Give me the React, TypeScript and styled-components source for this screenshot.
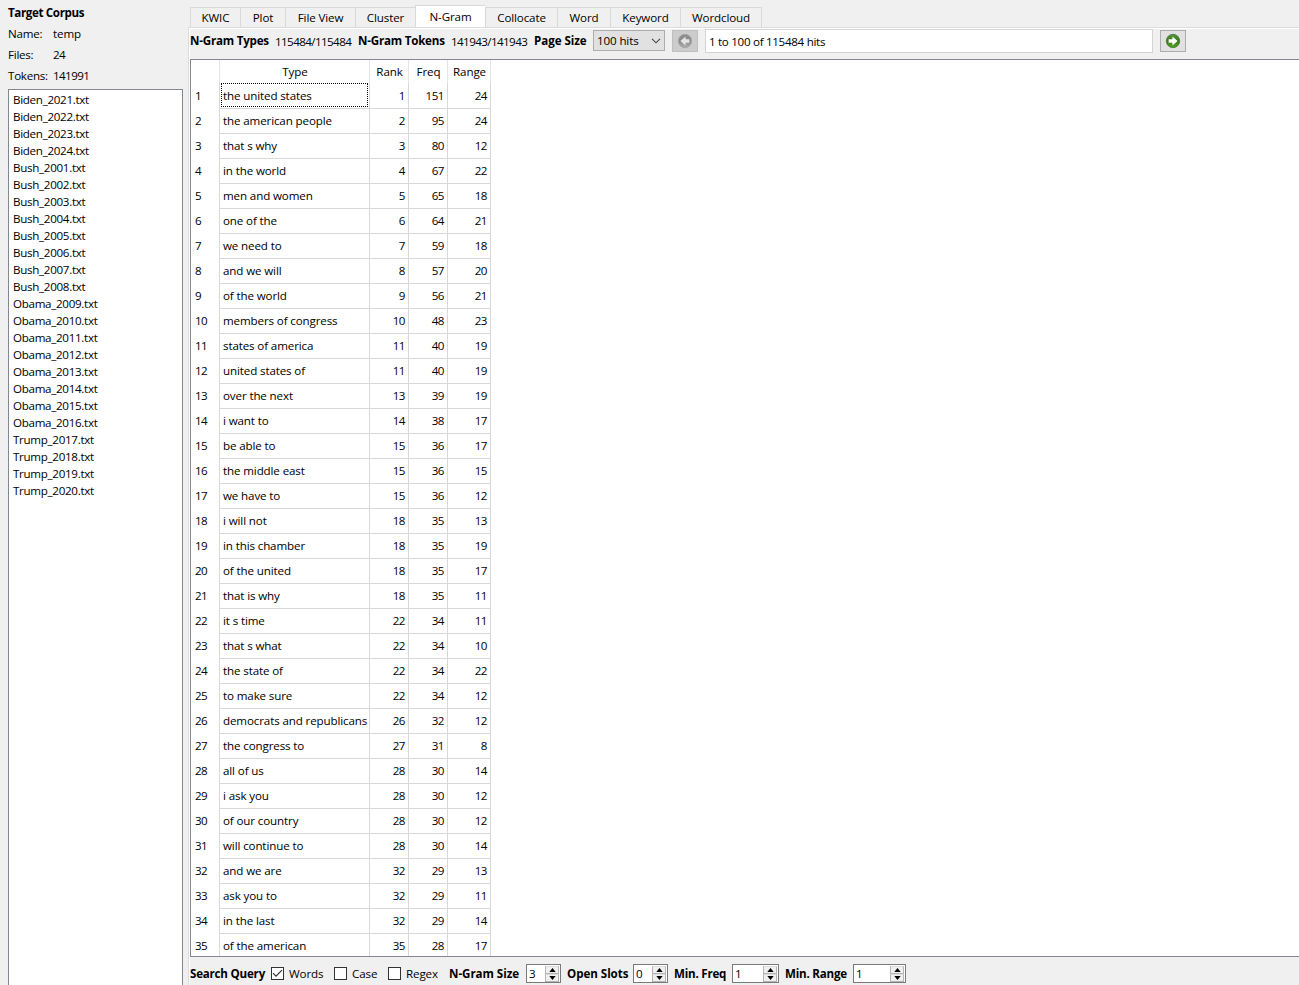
import React from "react";
import styled, { createGlobalStyle } from "styled-components";

const GlobalStyle = createGlobalStyle`
  * { box-sizing: border-box; }
  html, body { margin: 0; padding: 0; overflow: hidden; }
  body { background: #f0f0f0; color: #000; font: 11.6px/17px "Open Sans", "Noto Sans", sans-serif; letter-spacing: -0.13px; }
`;

const Window = styled.div`
  display: flex;
  width: 1299px;
  height: 985px;
  overflow: hidden;
  white-space: nowrap;
`;

const Sidebar = styled.aside`
  flex: none;
  width: 188px;
  padding: 4px 5px 0 8px;
  display: flex;
  flex-direction: column;
`;

const Heading = styled.div`
  height: 21px;
  line-height: 18px;
  font-weight: 700;
  letter-spacing: -0.37px;
`;

const InfoRow = styled.div`
  display: flex;
  height: 21px;
  line-height: 17px;
`;

const InfoLabel = styled.span`
  width: 45px;
  letter-spacing: -0.25px;
`;

const Digits = styled.span`
  letter-spacing: -0.58px;
`;

const FileList = styled.ul`
  list-style: none;
  margin: 1px 0 0;
  padding: 2px 4px;
  flex: 1;
  background: #fff;
  border: 1px solid #828790;
  border-bottom: 0;
`;

const FileItem = styled.li`
  height: 17px;
  line-height: 16px;
  letter-spacing: -0.3px;
`;

const Main = styled.main`
  flex: 1;
  min-width: 0;
  display: flex;
  flex-direction: column;
`;

const TabBar = styled.div`
  display: flex;
  align-items: flex-end;
  height: 27px;
  padding-left: 2px;
`;

const Tab = styled.div<{ $w: number; $active?: boolean; $last?: boolean }>`
  width: ${(p) => p.$w}px;
  height: ${(p) => (p.$active ? 23 : 20)}px;
  margin-bottom: ${(p) => (p.$active ? -1 : 0)}px;
  line-height: ${(p) => (p.$active ? 21 : 20)}px;
  text-align: center;
  background: ${(p) => (p.$active ? "#fff" : "#f0f0f0")};
  border: 1px solid #d9d9d9;
  border-bottom: 0;
  border-right-width: ${(p) => (p.$last ? 1 : 0)}px;
`;

const Pane = styled.section`
  flex: 1;
  min-height: 0;
  display: flex;
  flex-direction: column;
  border-left: 1px solid #dcdcdc;
  border-top: 1px solid #dcdcdc;
  box-shadow: inset 1px 1px 0 #fff;
  padding-left: 1px;
`;

const Toolbar = styled.div`
  display: flex;
  flex: none;
  height: 31px;
  padding-top: 1px;
`;

const Strong = styled.span<{ $w: number; $spacing?: number }>`
  flex: none;
  width: ${(p) => p.$w}px;
  line-height: 24px;
  font-weight: 700;
  letter-spacing: ${(p) => p.$spacing ?? -0.22}px;
`;

const Count = styled(Digits)<{ $w: number }>`
  flex: none;
  width: ${(p) => p.$w}px;
  line-height: 25px;
`;

const Select = styled.div`
  display: flex;
  flex: none;
  justify-content: space-between;
  align-items: center;
  width: 72px;
  height: 21px;
  margin: 1px 7px 0 0;
  padding: 0 3px;
  background: #e1e1e1;
  border: 1px solid #adadad;
`;

const NavButton = styled.button<{ $disabled?: boolean }>`
  flex: none;
  display: flex;
  align-items: center;
  justify-content: center;
  width: 26px;
  height: 22px;
  margin-top: 1px;
  padding: 0 1px 0 0;
  background: ${(p) => (p.$disabled ? "#cccccc" : "#e1e1e1")};
  border: 1px solid ${(p) => (p.$disabled ? "#bfbfbf" : "#adadad")};
`;

const HitsField = styled.div`
  flex: none;
  width: 448px;
  height: 24px;
  margin: 0 7px;
  padding-left: 3px;
  line-height: 23px;
  letter-spacing: -0.3px;
  background: #fff;
  border: 1px solid #d4d4d4;
`;

const TableFrame = styled.div`
  flex: none;
  height: 898px;
  background: #fff;
  border: 1px solid #828790;
  border-right: 0;
  overflow: hidden;
`;

const Row = styled.div`
  display: grid;
  grid-template-columns: 29px 150px 39px 39px 43px;
  height: 25px;
`;

const HeaderRow = styled(Row)`
  height: 23px;
`;

const HeaderCell = styled.div`
  padding-left: 1px;
  text-align: center;
  line-height: 24px;
  border-right: 1px solid #e5e5e5;
`;

const RowNumber = styled.div`
  padding-left: 4px;
  line-height: 25px;
  letter-spacing: -0.55px;
  border-right: 1px solid #d8d8d8;
`;

const Cell = styled.div<{ $num?: boolean }>`
  padding: 0 3px;
  line-height: 25px;
  text-align: ${(p) => (p.$num ? "right" : "left")};
  letter-spacing: ${(p) => (p.$num ? "-0.5px" : "-0.13px")};
  border-right: 1px solid #d8d8d8;
  border-bottom: 1px solid #d8d8d8;
`;

const FocusCell = styled(Cell)`
  padding: 0 1px 0 1px;
  & > span {
    display: block;
    height: 24px;
    padding-left: 1px;
    border: 1px dotted #000;
    line-height: 23px;
  }
`;

const SearchBar = styled.div`
  display: flex;
  flex: 1;
  padding-top: 5px;
`;

const CheckBox = styled.span`
  flex: none;
  display: flex;
  width: 13px;
  height: 13px;
  margin: 5px 5px 0 0;
  background: #fff;
  border: 1px solid #333;
`;

const Option = styled.span<{ $w: number }>`
  flex: none;
  width: ${(p) => p.$w}px;
  line-height: 24px;
`;

const Spin = styled.div<{ $w: number; $gap: number }>`
  flex: none;
  display: flex;
  justify-content: space-between;
  width: ${(p) => p.$w}px;
  height: 19px;
  margin: 2px ${(p) => p.$gap}px 0 0;
  padding-left: 2px;
  line-height: 18px;
  background: #fff;
  border: 1px solid #7a7a7a;
`;

const Steppers = styled.div`
  display: flex;
  flex-direction: column;
  width: 15px;
  padding: 1px 1px 0 0;
`;

const Stepper = styled.div`
  display: flex;
  align-items: center;
  justify-content: center;
  height: 8px;
  background: #f0f0f0;
  border: 1px solid #b4b4b4;
  border-top-color: #dcdcdc;
`;

const files = [
  "Biden_2021", "Biden_2022", "Biden_2023", "Biden_2024",
  "Bush_2001", "Bush_2002", "Bush_2003", "Bush_2004", "Bush_2005", "Bush_2006", "Bush_2007", "Bush_2008",
  "Obama_2009", "Obama_2010", "Obama_2011", "Obama_2012", "Obama_2013", "Obama_2014", "Obama_2015", "Obama_2016",
  "Trump_2017", "Trump_2018", "Trump_2019", "Trump_2020",
];

const tabs: [string, number][] = [
  ["KWIC", 50], ["Plot", 45], ["File View", 70], ["Cluster", 60], ["N-Gram", 70],
  ["Collocate", 72], ["Word", 53], ["Keyword", 70], ["Wordcloud", 82],
];

const ngrams: [string, number, number, number][] = [
  ["the united states", 1, 151, 24],
  ["the american people", 2, 95, 24],
  ["that s why", 3, 80, 12],
  ["in the world", 4, 67, 22],
  ["men and women", 5, 65, 18],
  ["one of the", 6, 64, 21],
  ["we need to", 7, 59, 18],
  ["and we will", 8, 57, 20],
  ["of the world", 9, 56, 21],
  ["members of congress", 10, 48, 23],
  ["states of america", 11, 40, 19],
  ["united states of", 11, 40, 19],
  ["over the next", 13, 39, 19],
  ["i want to", 14, 38, 17],
  ["be able to", 15, 36, 17],
  ["the middle east", 15, 36, 15],
  ["we have to", 15, 36, 12],
  ["i will not", 18, 35, 13],
  ["in this chamber", 18, 35, 19],
  ["of the united", 18, 35, 17],
  ["that is why", 18, 35, 11],
  ["it s time", 22, 34, 11],
  ["that s what", 22, 34, 10],
  ["the state of", 22, 34, 22],
  ["to make sure", 22, 34, 12],
  ["democrats and republicans", 26, 32, 12],
  ["the congress to", 27, 31, 8],
  ["all of us", 28, 30, 14],
  ["i ask you", 28, 30, 12],
  ["of our country", 28, 30, 12],
  ["will continue to", 28, 30, 14],
  ["and we are", 32, 29, 13],
  ["ask you to", 32, 29, 11],
  ["in the last", 32, 29, 14],
  ["of the american", 35, 28, 17],
];

function ArrowIcon({ back }: { back?: boolean }) {
  const id = back ? "ball-back" : "ball-next";
  return (
    <svg width="16" height="16" viewBox="0 0 16 16">
      <defs>
        <linearGradient id={id} x1="0" y1="0" x2="0" y2="1">
          <stop offset="0" stopColor={back ? "#8c8c8c" : "#5c9440"} />
          <stop offset="0.5" stopColor={back ? "#8c8c8c" : "#34781a"} />
          <stop offset="1" stopColor={back ? "#adadad" : "#56a824"} />
        </linearGradient>
      </defs>
      <circle cx="8" cy="8" r="6.7" fill={`url(#${id})`} stroke={back ? "#a4a4a4" : "#3f7a2a"} strokeWidth="0.8" />
      <path
        d="M3.6 6.3H7.4V3.5L12.6 8L7.4 12.5V9.7H3.6Z"
        fill={back ? "#e4e4e4" : "#fff"}
        transform={back ? "matrix(-1 0 0 1 16 0)" : undefined}
      />
    </svg>
  );
}

function SpinBox({ value, width, gap = 0 }: { value: number; width: number; gap?: number }) {
  return (
    <Spin $w={width} $gap={gap}>
      <span>{value}</span>
      <Steppers>
        <Stepper>
          <svg width="7" height="4" viewBox="0 0 7 4"><path d="M0.3 4L3.5 0L6.7 4Z" /></svg>
        </Stepper>
        <Stepper>
          <svg width="7" height="4" viewBox="0 0 7 4"><path d="M0.3 0L3.5 4L6.7 0Z" /></svg>
        </Stepper>
      </Steppers>
    </Spin>
  );
}

export default function App() {
  return (
    <Window>
      <GlobalStyle />
      <Sidebar>
        <Heading>Target Corpus</Heading>
        <InfoRow><InfoLabel>Name:</InfoLabel><span>temp</span></InfoRow>
        <InfoRow><InfoLabel>Files:</InfoLabel><Digits>24</Digits></InfoRow>
        <InfoRow><InfoLabel>Tokens:</InfoLabel><Digits>141991</Digits></InfoRow>
        <FileList>
          {files.map((f) => <FileItem key={f}>{f}.txt</FileItem>)}
        </FileList>
      </Sidebar>
      <Main>
        <TabBar>
          {tabs.map(([name, w], i) => (
            <Tab key={name} $w={w} $active={name === "N-Gram"} $last={i === tabs.length - 1}>{name}</Tab>
          ))}
        </TabBar>
        <Pane>
          <Toolbar>
            <Strong $w={85}>N-Gram Types</Strong>
            <Count $w={83}>115484/115484</Count>
            <Strong $w={93}>N-Gram Tokens</Strong>
            <Count $w={83}>141943/141943</Count>
            <Strong $w={59} $spacing={-0.05}>Page Size</Strong>
            <Select>
              <span>100 hits</span>
              <svg width="10" height="6" viewBox="0 0 10 6"><path d="M1 0.8L5 4.8L9 0.8" fill="none" stroke="#444" strokeWidth="1.1" /></svg>
            </Select>
            <NavButton $disabled><ArrowIcon back /></NavButton>
            <HitsField>1 to 100 of 115484 hits</HitsField>
            <NavButton><ArrowIcon /></NavButton>
          </Toolbar>
          <TableFrame>
            <HeaderRow>
              <HeaderCell />
              <HeaderCell>Type</HeaderCell>
              <HeaderCell>Rank</HeaderCell>
              <HeaderCell>Freq</HeaderCell>
              <HeaderCell>Range</HeaderCell>
            </HeaderRow>
            {ngrams.map(([type, rank, freq, range], i) => (
              <Row key={type}>
                <RowNumber>{i + 1}</RowNumber>
                {i === 0 ? <FocusCell><span>{type}</span></FocusCell> : <Cell>{type}</Cell>}
                <Cell $num>{rank}</Cell>
                <Cell $num>{freq}</Cell>
                <Cell $num>{range}</Cell>
              </Row>
            ))}
          </TableFrame>
          <SearchBar>
            <Strong $w={81}>Search Query</Strong>
            <CheckBox>
              <svg width="11" height="11" viewBox="0 0 11 11"><path d="M1 5.2L4 8.2L10 2.2" fill="none" stroke="#333" strokeWidth="1.2" /></svg>
            </CheckBox>
            <Option $w={45}>Words</Option>
            <CheckBox />
            <Option $w={36}>Case</Option>
            <CheckBox />
            <Option $w={43}>Regex</Option>
            <Strong $w={77} $spacing={-0.05}>N-Gram Size</Strong>
            <SpinBox value={3} width={35} gap={6} />
            <Strong $w={66} $spacing={-0.05}>Open Slots</Strong>
            <SpinBox value={0} width={35} gap={6} />
            <Strong $w={58}>Min. Freq</Strong>
            <SpinBox value={1} width={47} gap={6} />
            <Strong $w={68}>Min. Range</Strong>
            <SpinBox value={1} width={53} />
          </SearchBar>
        </Pane>
      </Main>
    </Window>
  );
}
